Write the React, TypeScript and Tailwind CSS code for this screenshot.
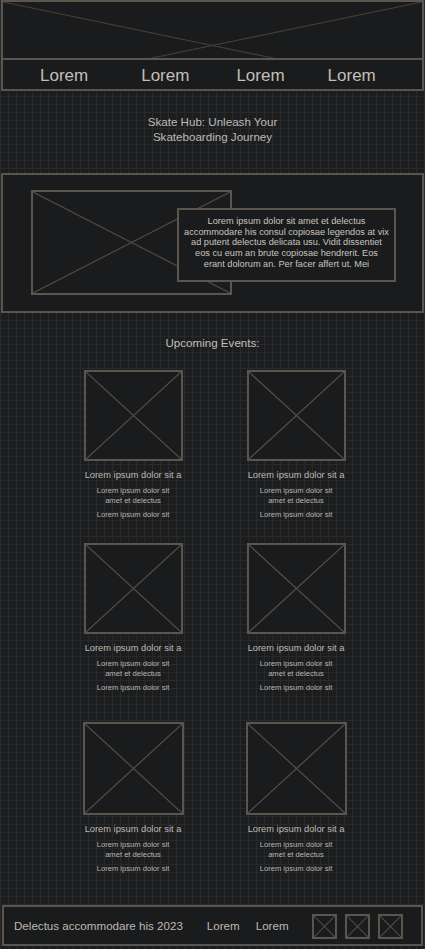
import React from "react";

const EVENTS = [
  { row: 0, size: "h-[91px] w-[99px]" },
  { row: 1, size: "h-[91px] w-[99px]" },
  { row: 2, size: "h-[93px] w-[101px]" },
];

function Placeholder({ className = "", line = "#4f4a42" }: { className?: string; line?: string }) {
  return (
    <div className={`relative border-2 border-[#5b554c] bg-[#1a1b1d] ${className}`}>
      <svg className="absolute inset-0 h-full w-full" viewBox="0 0 100 100" preserveAspectRatio="none">
        <line x1="0" y1="0" x2="100" y2="100" stroke={line} strokeWidth="1.2" vectorEffect="non-scaling-stroke" />
        <line x1="100" y1="0" x2="0" y2="100" stroke={line} strokeWidth="1.2" vectorEffect="non-scaling-stroke" />
      </svg>
    </div>
  );
}

function EventCard({ size }: { size: string }) {
  return (
    <div className="flex w-[150px] flex-col items-center">
      <Placeholder className={size} line="#554f47" />
      <div className="mt-[8px] text-[9.3px] leading-[12px] text-[#bfbbb4]">Lorem ipsum dolor sit a</div>
      <div className="mt-[5px] text-center text-[7.6px] leading-[10px] text-[#bab6af]">
        Lorem ipsum dolor sit
        <br />
        amet et delectus
      </div>
      <div className="mt-[4px] text-[7.6px] leading-[10px] text-[#bab6af]">Lorem ipsum dolor sit</div>
    </div>
  );
}

export default function App() {
  return (
    <div
      className="flex min-h-screen w-[425px] flex-col bg-[#1c1d1f] bg-[linear-gradient(to_right,#27292b_1px,transparent_1px),linear-gradient(to_bottom,#27292b_1px,transparent_1px)] bg-[size:8px_8px] pb-[2px] text-[#c6c2bb]"
      style={{ fontFamily: '"Liberation Sans", Arial, sans-serif' }}
    >
      {/* ── Header ── */}
      <header className="relative mx-[1px] flex h-[91px] flex-col border-2 border-[#5b554c] bg-[#1a1b1d]">
        <svg className="absolute inset-0 h-full w-full" viewBox="0 0 100 100" preserveAspectRatio="none">
          <line x1="0" y1="0" x2="100" y2="100" stroke="#423e37" strokeWidth="1.2" vectorEffect="non-scaling-stroke" />
          <line x1="100" y1="0" x2="0" y2="100" stroke="#423e37" strokeWidth="1.2" vectorEffect="non-scaling-stroke" />
        </svg>
        <div className="h-[56px] shrink-0" />
        <nav className="relative flex flex-1 items-center border-t-2 border-[#5b554c] bg-[#1a1b1d] pl-[37px] pt-[2px] text-[17px] leading-[20px] text-[#c3bfb8]">
          <span>Lorem</span>
          <span className="ml-[53px]">Lorem</span>
          <span className="ml-[47px]">Lorem</span>
          <span className="ml-[43px]">Lorem</span>
        </nav>
      </header>

      {/* ── Title ── */}
      <h1 className="mt-[23px] text-center text-[11.6px] leading-[15px] text-[#bfbbb4]">
        Skate Hub: Unleash Your
        <br />
        Skateboarding Journey
      </h1>

      {/* ── Hero ── */}
      <section className="mx-[1px] mt-[29px] flex h-[140px] items-start border-2 border-[#5b554c] bg-[#1a1b1d] pl-[28px] pt-[15px]">
        <Placeholder className="h-[105px] w-[201px] shrink-0" line="#4f4a42" />
        <div className="relative ml-[-55px] mt-[18px] h-[74px] w-[219px] shrink-0 border-2 border-[#5b554c] bg-[#1a1b1d] pt-[6px] text-center text-[9.2px] leading-[10.7px] text-[#c9c5be]">
          Lorem ipsum dolor sit amet et delectus
          <br />
          accommodare his consul copiosae legendos at vix
          <br />
          ad putent delectus delicata usu. Vidit dissentiet
          <br />
          eos cu eum an brute copiosae hendrerit. Eos
          <br />
          erant dolorum an. Per facer affert ut. Mei
        </div>
      </section>

      {/* ── Events ── */}
      <h2 className="mt-[22px] text-center text-[11.6px] leading-[15px] text-[#c3bfb8]">Upcoming Events:</h2>

      <div className="flex flex-col pl-[58px]">
        {EVENTS.map((r) => (
          <div
            key={r.row}
            className={`flex gap-[13px] ${r.row === 0 ? "mt-[20px]" : r.row === 1 ? "mt-[23px]" : "mt-[29px]"}`}
          >
            <EventCard size={r.size} />
            <EventCard size={r.size} />
          </div>
        ))}
      </div>

      {/* ── Footer ── */}
      <footer className="mx-[2px] mt-[31px] flex h-[41px] items-center border-2 border-[#5b554c] bg-[#1a1b1d] pl-[10px] pt-[1px] text-[11.6px] leading-[14px] text-[#bdb9b2]">
        <span>Delectus accommodare his 2023</span>
        <span className="ml-[24px]">Lorem</span>
        <span className="ml-[16px]">Lorem</span>
        <div className="ml-[23px] flex gap-[8px]">
          <Placeholder className="h-[25px] w-[25px]" line="#4f4a42" />
          <Placeholder className="h-[25px] w-[25px]" line="#4f4a42" />
          <Placeholder className="h-[25px] w-[25px]" line="#4f4a42" />
        </div>
      </footer>
    </div>
  );
}
